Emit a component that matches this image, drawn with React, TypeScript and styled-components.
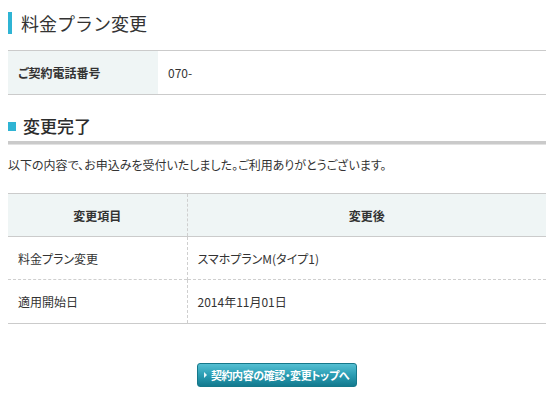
import React from 'react';
import styled, { createGlobalStyle } from 'styled-components';

const GlobalStyle = createGlobalStyle`
	html, body {
		margin: 0;
		padding: 0;
		background: #fff;
	}
	body {
		font-family: "Noto Sans CJK JP", "Noto Sans", sans-serif;
		color: #333;
		font-size: 12px;
	}
`;

const Page = styled.div`
	width: 538px;
	padding: 12px 8px 0;
`;

const Title = styled.h1`
	margin: 0;
	height: 22px;
	display: flex;
	align-items: center;
	gap: 9px;
	font-size: 18px;
	font-weight: normal;
	line-height: 22px;
	color: #333;
	&::before {
		content: '';
		width: 4px;
		height: 22px;
		background: #2fb4d4;
	}
`;

const Table = styled.table<{ $top: number }>`
	width: 100%;
	margin-top: ${(p) => p.$top}px;
	border-collapse: collapse;
	table-layout: fixed;
	border-top: 1px solid #cbcbcb;
	border-bottom: 1px solid #cbcbcb;
	font-feature-settings: 'palt';
	tr + tr > td {
		border-top: 1px dashed #cfcfcf;
	}
`;

const Row = styled.tr<{ $height?: number }>`
	height: ${(p) => p.$height ?? 43}px;
`;

const Head = styled.th<{ $width?: number; $center?: boolean }>`
	box-sizing: border-box;
	width: ${(p) => (p.$width ? `${p.$width}px` : 'auto')};
	padding: 0 10px;
	background: #eff5f5;
	border-bottom: 1px solid #cbcbcb;
	text-align: ${(p) => (p.$center ? 'center' : 'left')};
	font-size: 12px;
	font-weight: bold;
	color: #333;
	& + th {
		border-left: 1px dashed #cfcfcf;
	}
`;

const Cell = styled.td`
	box-sizing: border-box;
	padding: 0 10px;
	font-size: 12px;
	color: #333;
	& + td {
		border-left: 1px dashed #cfcfcf;
	}
`;

const SectionTitle = styled.h2`
	margin: 21px 0 0;
	padding-bottom: 5px;
	display: flex;
	align-items: center;
	gap: 7px;
	font-size: 17px;
	font-weight: 500;
	line-height: 20px;
	color: #2d2d2d;
	border-bottom: 3px solid #cacaca;
	box-shadow: 0 1px 0 #e2e2e2;
	&::before {
		content: '';
		width: 8px;
		height: 9px;
		background: #2fb4d4;
	}
`;

const Lead = styled.p`
	margin: 13px 0 0;
	font-size: 12px;
	line-height: 16px;
	font-feature-settings: 'palt';
`;

const Actions = styled.div`
	display: flex;
	justify-content: center;
	margin-top: 39px;
`;

const ActionButton = styled.button`
	display: flex;
	align-items: center;
	gap: 4px;
	height: 24px;
	padding: 0 7px 0 6px;
	border: 1px solid #16788a;
	border-radius: 3px;
	background: linear-gradient(#55bfd2, #2a9db3 50%, #137a8f);
	color: #fff;
	font-family: inherit;
	font-size: 11px;
	font-weight: bold;
	font-feature-settings: 'palt';
	letter-spacing: -0.4px;
	cursor: pointer;
	&::before {
		content: '';
		border-left: 3px solid #e8f6f9;
		border-top: 3px solid transparent;
		border-bottom: 3px solid transparent;
	}
`;

export default function App() {
	return (
		<>
			<GlobalStyle />
			<Page>
				<Title>料金プラン変更</Title>
				<Table $top={16}>
					<tbody>
						<Row $height={44}>
							<Head $width={150}>ご契約電話番号</Head>
							<Cell>070-</Cell>
						</Row>
					</tbody>
				</Table>
				<SectionTitle>変更完了</SectionTitle>
				<Lead>以下の内容で、お申込みを受付いたしました。ご利用ありがとうございます。</Lead>
				<Table $top={20}>
					<tbody>
						<Row>
							<Head $width={179} $center>変更項目</Head>
							<Head $center>変更後</Head>
						</Row>
						<Row>
							<Cell>料金プラン変更</Cell>
							<Cell>スマホプランM(タイプ1)</Cell>
						</Row>
						<Row $height={44}>
							<Cell>適用開始日</Cell>
							<Cell>2014年11月01日</Cell>
						</Row>
					</tbody>
				</Table>
				<Actions>
					<ActionButton type="button">契約内容の確認・変更トップへ</ActionButton>
				</Actions>
			</Page>
		</>
	);
}
